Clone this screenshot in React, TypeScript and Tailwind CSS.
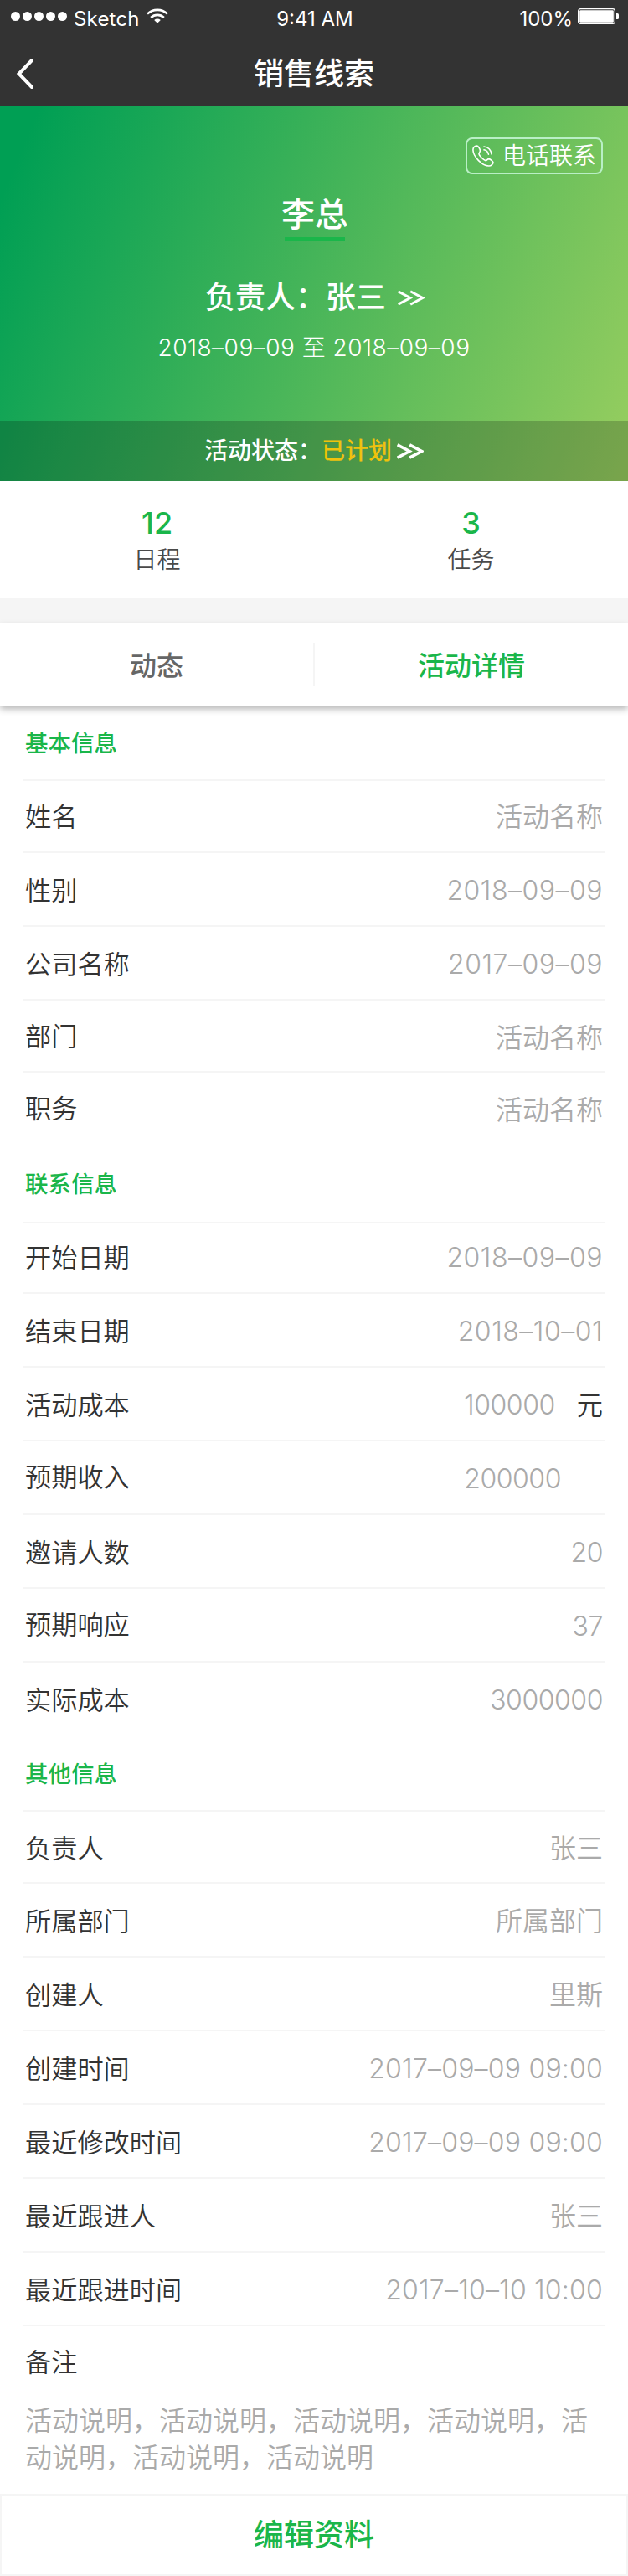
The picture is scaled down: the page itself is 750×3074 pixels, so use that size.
interface Field {
  label: string
  value: string
  /** Height of the row, divider included */
  row?: string
  labelPad?: string
  valuePad?: string
  valueClass?: string
  unit?: string
}

interface Section {
  title: string
  titleClass: string
  fields: Field[]
}

const SHORT = 'pt-[21px]'
const TEXT = 'font-[350]'
const DATE = 'tracking-[0.5px]'
const STAMP = 'tracking-[0.2px]'
const NUMBER = 'tracking-[-0.45px]'

const sections: Section[] = [
  {
    title: '基本信息',
    titleClass: 'h-[90px]',
    fields: [
      { label: '姓名', value: '活动名称', row: 'h-[86px]', labelPad: SHORT, valuePad: SHORT, valueClass: TEXT },
      { label: '性别', value: '2018–09–09', valueClass: DATE },
      { label: '公司名称', value: '2017–09–09', valueClass: DATE },
      { label: '部门', value: '活动名称', row: 'h-[86px]', labelPad: SHORT, valueClass: TEXT },
      { label: '职务', value: '活动名称', labelPad: SHORT, valueClass: TEXT },
    ],
  },
  {
    title: '联系信息',
    titleClass: 'h-[92px]',
    fields: [
      { label: '开始日期', value: '2018–09–09', row: 'h-[84px]', labelPad: 'pt-[19px]', valuePad: 'pt-[19px]', valueClass: DATE },
      { label: '结束日期', value: '2018–10–01', valueClass: DATE },
      { label: '活动成本', value: '100000', valueClass: NUMBER, unit: '元' },
      { label: '预期收入', value: '200000', labelPad: SHORT, valueClass: 'mr-[50px] tracking-[-0.45px]' },
      { label: '邀请人数', value: '20', valueClass: NUMBER },
      { label: '预期响应', value: '37', labelPad: SHORT, valueClass: NUMBER },
      { label: '实际成本', value: '3000000', valueClass: NUMBER },
    ],
  },
  {
    title: '其他信息',
    titleClass: 'h-[90px]',
    fields: [
      { label: '负责人', value: '张三', row: 'h-[86px]', labelPad: 'pt-[22px]', valuePad: 'pt-[22px]', valueClass: TEXT },
      { label: '所属部门', value: '所属部门', valueClass: TEXT },
      { label: '创建人', value: '里斯', valueClass: TEXT },
      { label: '创建时间', value: '2017–09–09 09:00', valueClass: STAMP },
      { label: '最近修改时间', value: '2017–09–09 09:00', valueClass: STAMP },
      { label: '最近跟进人', value: '张三', valueClass: TEXT },
      { label: '最近跟进时间', value: '2017–10–10 10:00', valueClass: STAMP },
    ],
  },
]

function Chevrons({ stroke, className }: { stroke: number; className: string }) {
  return (
    <svg viewBox="0 0 32 19" className={className} fill="none" stroke="white" strokeWidth={stroke}>
      <path d="M0.6 1.8 15 9.5 0.6 17.2" />
      <path d="M15.2 1.8 29.6 9.5 15.2 17.2" />
    </svg>
  )
}

function StatusBar() {
  return (
    <div className="grid h-10 grid-cols-3 items-start pl-[13px] pr-[11px] pt-[7px] text-[24px] leading-8 text-white">
      <div className="flex">
        <div className="flex gap-[3px] pt-[7px]">
          {[0, 1, 2, 3, 4].map((i) => (
            <span key={i} className="size-[11px] rounded-full bg-white" />
          ))}
        </div>
        <span className="ml-2 tracking-[0.2px]">Sketch</span>
        <svg viewBox="0 0 26 18" className="ml-2 mt-[3px] h-[18px] w-[26px]" fill="none" stroke="white" strokeWidth="2.6">
          <path d="M1 6.6a17.5 17.5 0 0 1 24 0" />
          <path d="M5.2 11a11.4 11.4 0 0 1 15.6 0" />
          <path d="M13 17.8l-3.8-3.9a5.6 5.6 0 0 1 7.6 0z" fill="white" stroke="none" />
        </svg>
      </div>
      <span className="text-center">9:41 AM</span>
      <div className="flex justify-end">
        <span>100%</span>
        <svg viewBox="0 0 49 19" className="ml-[6px] mt-[3px] h-[19px] w-[49px]">
          <rect x="0.6" y="0.6" width="43.8" height="17.8" rx="2.6" fill="none" stroke="white" strokeWidth="1.2" />
          <rect x="2.2" y="2.2" width="40.6" height="14.6" rx="1.4" fill="white" />
          <path d="M46 6h1.4a1.6 1.6 0 0 1 1.6 1.6v3.8a1.6 1.6 0 0 1-1.6 1.6H46z" fill="white" />
        </svg>
      </div>
    </div>
  )
}

function NavBar() {
  return (
    <div className="grid h-[86px] grid-cols-[1fr_auto_1fr] text-white">
      <svg viewBox="0 0 22 38" className="ml-[19px] mt-[29px] h-[38px] w-[22px]" fill="none" stroke="white" strokeWidth="4" strokeLinecap="round">
        <path d="M19 3 3.6 19 19 35" />
      </svg>
      <h1 className="pt-[22px] text-[36px] font-medium leading-[52px]">销售线索</h1>
    </div>
  )
}

function Hero() {
  return (
    <section className="flex h-[448px] flex-col items-center bg-[linear-gradient(113deg,#009f54_5%,#98ce5f_100%)] pt-[38px] text-white">
      <button className="mr-[30px] flex h-11 w-[164px] self-end rounded-lg border-2 border-[#b9efc6] pl-[6px] font-[350]">
        <svg viewBox="0 0 26 26" className="mt-[7px] size-[26px] shrink-0" fill="none" stroke="white" strokeWidth="1.6" strokeLinecap="round">
          <path d="M5.5 1C3 1.2.9 3 .9 6 1.2 14 12 25.2 20 25c2.5 0 5-2.4 5-4.2 0-1.2-3.5-4-5.2-4.2-1.4-.1-2.4 2-3.8 2-2.2-.2-7.8-6-8-8 0-1.4 1.6-2.4 1.4-4C9.2 4.6 7 1 5.5 1z" />
          <path d="M14 2c5 .6 8.4 4.2 9 9M14 5.8c3 .6 4.8 2.4 5.4 5.4" />
        </svg>
        <span className="ml-[10px] whitespace-nowrap text-[28px] leading-[41px]">电话联系</span>
      </button>
      <div className="ml-0.5 mt-5 flex w-[72px] justify-center border-b-4 border-[#1ab64a] text-[40px] font-medium leading-[55px]">
        <h2 className="shrink-0 whitespace-nowrap">李总</h2>
      </div>
      <div className="mt-[42px] flex items-center pl-0.5 text-[36px] font-medium leading-[52px]">
        <span>负责人：张三</span>
        <Chevrons stroke={3} className="ml-[14px] h-[19px] w-8" />
      </div>
      <p className="mt-[14px] whitespace-pre text-[28px] font-light leading-10 tracking-[0.5px]">
        2018–09–09 至 2018–09–09
      </p>
      <div className="mt-auto flex h-[72px] w-full items-center justify-center bg-black/20 text-[28px] font-medium leading-10">
        <span>活动状态：</span>
        <span className="text-[#f0c20c]">已计划</span>
        <Chevrons stroke={3.6} className="ml-[6px] h-[19px] w-8" />
      </div>
    </section>
  )
}

function Stat({ count, label }: { count: string; label: string }) {
  return (
    <div className="flex flex-col items-center pt-7">
      <span className="text-[36px] font-medium leading-[44px] text-[#1ab64a]">{count}</span>
      <span className="mt-[2px] text-[28px] font-[350] leading-10 text-[#4a4a4a]">{label}</span>
    </div>
  )
}

function FieldRow({ field, last }: { field: Field; last: boolean }) {
  return (
    <div
      className={`flex justify-between border-[#f5f5f5] px-0.5 leading-[44px] ${field.row ?? 'h-[88px]'} ${last ? '' : 'border-b-2'}`}
    >
      <span className={`text-[31.2px] font-[350] text-[#333] ${field.labelPad ?? 'pt-[23px]'}`}>{field.label}</span>
      <span className={`flex text-[32px] font-light text-[#aaa] ${field.valuePad ?? 'pt-[23px]'}`}>
        <span className={field.valueClass ?? ''}>{field.value}</span>
        {field.unit && <span className="ml-[26px] text-[31.2px] font-[350] text-[#333]">{field.unit}</span>}
      </span>
    </div>
  )
}

export default function App() {
  return (
    <div className="h-[3074px] w-[750px] overflow-hidden bg-white font-['Inter','Noto_Sans_CJK_SC',sans-serif]">
      <header className="bg-[#333]">
        <StatusBar />
        <NavBar />
      </header>
      <Hero />
      <div className="grid h-[140px] grid-cols-2">
        <Stat count="12" label="日程" />
        <Stat count="3" label="任务" />
      </div>
      <div className="h-[30px] bg-[#f5f5f5]" />
      <nav className="relative flex h-[98px] items-center bg-white text-[32px] font-medium leading-[44px] shadow-[0_4px_8px_rgba(0,0,0,0.3)]">
        <button className="flex-1 pt-[3px] text-[#666]">动态</button>
        <span className="h-[52px] w-0.5 bg-[#f5f5f5]" />
        <button className="flex-1 pt-[3px] text-[#1ab64a]">活动详情</button>
      </nav>
      <main className="h-[2134px] px-7">
        {sections.map((section) => (
          <section key={section.title}>
            <h3 className={`border-b-2 border-[#f5f5f5] px-0.5 pt-[23px] text-[27.5px] font-medium leading-[44px] text-[#1ab64a] ${section.titleClass}`}>
              {section.title}
            </h3>
            {section.fields.map((field, i) => (
              <FieldRow key={field.label} field={field} last={i === section.fields.length - 1 && section.title !== '其他信息'} />
            ))}
          </section>
        ))}
        <section className="px-0.5 pt-[21px] leading-[44px]">
          <h4 className="text-[31.2px] font-[350] text-[#333]">备注</h4>
          <p className="mt-[26px] text-[32px] font-[350] text-[#aaa]">
            活动说明，活动说明，活动说明，活动说明，活动说明，活动说明，活动说明
          </p>
        </section>
      </main>
      <button className="block h-[98px] w-full border-2 border-[#f5f5f5] bg-white text-[36px] font-medium leading-[94px] text-[#1ab64a]">
        编辑资料
      </button>
    </div>
  )
}
